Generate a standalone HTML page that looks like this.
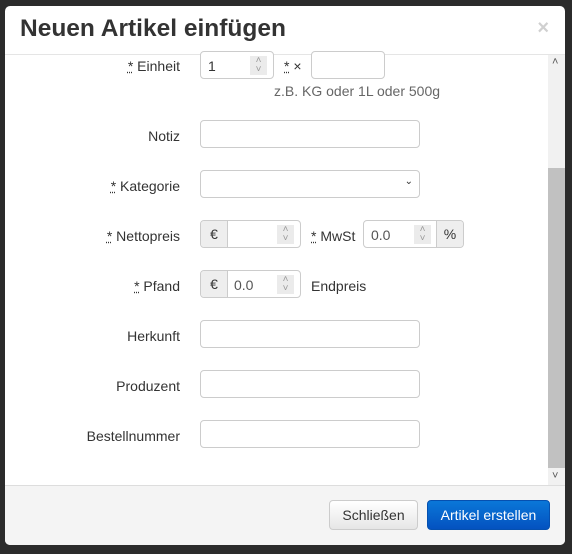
<!DOCTYPE html>
<html><head><style>
body{margin:0;width:572px;height:554px;background:#2b2b2b;position:relative;overflow:hidden;font-family:"Liberation Sans",sans-serif;font-size:14px;color:#333}
.a{position:absolute}
.m{left:5px;top:6px;width:560px;height:539px;background:#fff;border-radius:5px;overflow:hidden}
h1{position:absolute;left:15px;top:9px;margin:0;font-size:24.5px;font-weight:bold;color:#333}
.x{right:16px;top:11px;font-size:20px;color:#d0d0d0;font-weight:bold}
.hl{left:0;top:48px;width:560px;height:1px;background:#e5e5e5}
.lab{text-align:right;width:175px;left:0}
.in{border:1px solid #ccc;border-radius:4px;height:28px;box-sizing:border-box;background:#fff}
.sp{position:absolute;right:6px;top:4px;width:17px;height:19px;background:#ebebeb;color:#999;font-size:10px;line-height:9px;text-align:center}
.add{background:#eee;border-right:1px solid #ccc;height:100%;width:26px;text-align:center;line-height:26px;position:absolute;left:0;top:0}
.foot{left:0;top:479px;width:560px;height:60px;background:#f4f4f4;border-top:1px solid #ddd}
.btn{height:30px;box-sizing:border-box;border-radius:4px;text-align:center;line-height:28px}
u{text-decoration:underline dotted}
</style></head><body>
<div class="a m">
<h1>Neuen Artikel einfügen</h1>
<div class="a x">×</div>
<div class="a hl"></div>
<div class="a" style="left:543px;top:49px;width:17px;height:430px;background:#f1f1f1"></div>
<div class="a" style="left:543px;top:162px;width:17px;height:300px;background:#c1c1c1"></div>
<div class="a" style="left:547px;top:50px;font-size:11px;color:#555">˄</div>
<div class="a" style="left:547px;top:464px;font-size:11px;color:#555">˅</div>

<div class="a lab" style="top:52px"><u>*</u> Einheit</div>
<div class="a in" style="left:195px;top:45px;width:74px"><span class="a" style="left:7px;top:6px">1</span><div class="sp">˄<br>˅</div></div>
<div class="a" style="left:279px;top:52px"><u>*</u> ×</div>
<div class="a in" style="left:306px;top:45px;width:74px"></div>
<div class="a" style="left:269px;top:77px;color:#666">z.B. KG oder 1L oder 500g</div>

<div class="a lab" style="top:122px">Notiz</div>
<div class="a in" style="left:195px;top:114px;width:220px"></div>

<div class="a lab" style="top:172px"><u>*</u> Kategorie</div>
<div class="a in" style="left:195px;top:164px;width:220px"><span class="a" style="right:6px;top:5px;font-size:10px">⌄</span></div>

<div class="a lab" style="top:222px"><u>*</u> Nettopreis</div>
<div class="a in" style="left:195px;top:214px;width:101px;overflow:hidden"><div class="add">€</div><div class="sp">˄<br>˅</div></div>
<div class="a" style="left:306px;top:222px"><u>*</u> MwSt</div>
<div class="a in" style="left:358px;top:214px;width:101px;overflow:hidden"><span class="a" style="left:7px;top:6px;color:#555">0.0</span><div class="sp" style="right:32px">˄<br>˅</div><div class="add" style="left:auto;right:0;border-right:0;border-left:1px solid #ccc">%</div></div>

<div class="a lab" style="top:272px"><u>*</u> Pfand</div>
<div class="a in" style="left:195px;top:264px;width:101px;overflow:hidden"><div class="add">€</div><span class="a" style="left:33px;top:6px;color:#555">0.0</span><div class="sp">˄<br>˅</div></div>
<div class="a" style="left:306px;top:272px">Endpreis</div>

<div class="a lab" style="top:322px">Herkunft</div>
<div class="a in" style="left:195px;top:314px;width:220px"></div>
<div class="a lab" style="top:372px">Produzent</div>
<div class="a in" style="left:195px;top:364px;width:220px"></div>
<div class="a lab" style="top:422px">Bestellnummer</div>
<div class="a in" style="left:195px;top:414px;width:220px"></div>

<div class="a foot"></div>
<div class="a btn" style="left:324px;top:494px;width:89px;border:1px solid #ccc;background:linear-gradient(#fff,#e6e6e6);color:#333">Schließen</div>
<div class="a btn" style="left:422px;top:494px;width:123px;border:1px solid #0550b0;background:linear-gradient(#0a77d8,#0452c0);color:#fff">Artikel erstellen</div>
</div>
</body></html>
